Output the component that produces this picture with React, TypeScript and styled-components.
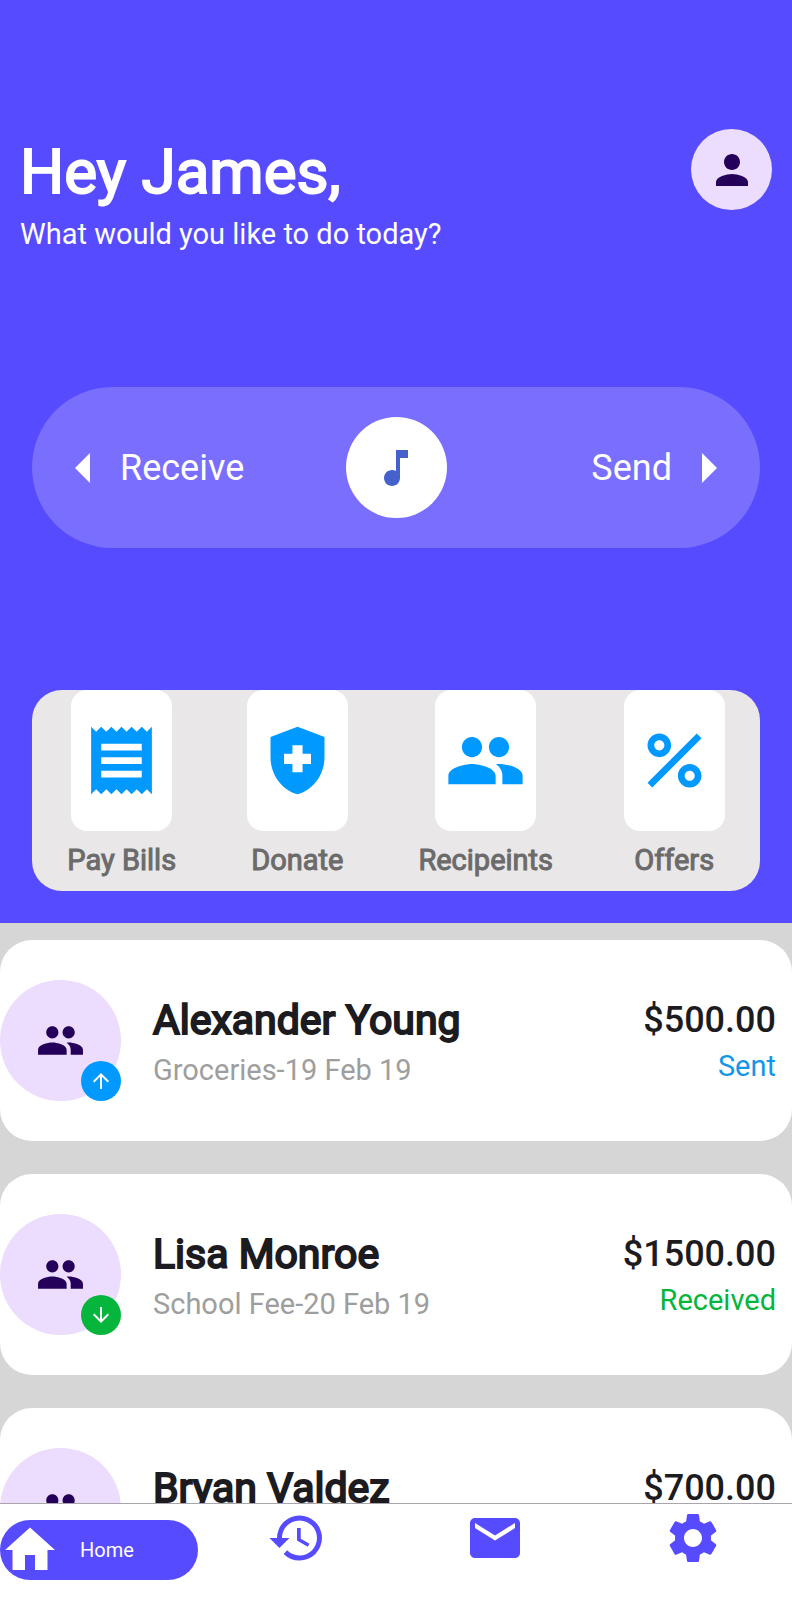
import React from "react";
import styled, { createGlobalStyle } from "styled-components";
import type { IconType } from "react-icons";
import {
  MdArrowDownward,
  MdArrowLeft,
  MdArrowRight,
  MdArrowUpward,
  MdHealthAndSafety,
  MdHistory,
  MdHome,
  MdMail,
  MdMusicNote,
  MdPeople,
  MdPercent,
  MdPerson,
  MdReceipt,
  MdSettings,
} from "react-icons/md";

const color = {
  primary: "#574bff",
  pill: "#7a6eff",
  sky: "#0099ff",
  green: "#05b53c",
  lilac: "#ecdcfd",
  ink: "#25005a",
  text: "#1c1b1f",
  muted: "#9e9e9e",
};

const GlobalStyle = createGlobalStyle`
  * { box-sizing: border-box; }
  body { margin: 0; font-family: Roboto, "Liberation Sans", sans-serif; }
  h1, h2, p, ul { margin: 0; padding: 0; }
  ul { list-style: none; }
  button { border: 0; padding: 0; background: none; font: inherit; cursor: pointer; }
  a { color: inherit; text-decoration: none; }
  svg { display: block; flex: none; }
`;

const Screen = styled.div`
  display: flex;
  flex-direction: column;
  height: 100vh;
  background: #d6d6d6;
`;

const Header = styled.header`
  flex: none;
  padding: 129px 0 32px;
  background: ${color.primary};
  color: #fff;
`;

const Greeting = styled.div`
  display: flex;
  justify-content: space-between;
  align-items: flex-start;
  padding: 0 20px;
`;

const GreetingText = styled.div`
  padding-top: 5px;
`;

const Title = styled.h1`
  font-size: 62px;
  line-height: 76px;
  font-weight: 400;
  -webkit-text-stroke: 2px currentColor;
`;

const Subtitle = styled.p`
  margin-top: 7px;
  font-size: 29px;
  line-height: 34px;
`;

const ProfileButton = styled.button`
  display: grid;
  place-items: center;
  width: 81px;
  height: 81px;
  border-radius: 50%;
  background: ${color.lilac};
  color: ${color.ink};
`;

const TransferBar = styled.div`
  display: grid;
  grid-template-columns: 1fr auto 1fr;
  align-items: center;
  height: 161px;
  margin: 136px 32px 0;
  padding: 0 16px;
  border-radius: 81px;
  background: ${color.pill};
`;

const TransferButton = styled.button<{ $end?: boolean }>`
  display: flex;
  align-items: center;
  justify-self: ${(p) => (p.$end ? "end" : "start")};
  color: #fff;
  font-size: 36px;
  line-height: 42px;
`;

const MusicButton = styled.button`
  display: grid;
  place-items: center;
  width: 101px;
  height: 101px;
  border-radius: 50%;
  background: #fff;
  color: #4562cc;
`;

const QuickPanel = styled.div`
  display: flex;
  justify-content: space-around;
  height: 201px;
  margin: 142px 32px 0;
  border-radius: 30px;
  background: #e9e7e8;
`;

const QuickAction = styled.button`
  display: flex;
  flex-direction: column;
  align-items: center;
  gap: 12px;
  color: #6b6b6b;
  font-size: 29px;
  line-height: 34px;
  -webkit-text-stroke: 1px currentColor;
`;

const QuickTile = styled.span`
  display: grid;
  place-items: center;
  width: 101px;
  height: 141px;
  border-radius: 16px;
  background: #fff;
  color: ${color.sky};
`;

const Feed = styled.ul`
  flex: 1;
  min-height: 0;
  overflow-y: auto;
  scrollbar-width: none;
  display: flex;
  flex-direction: column;
  gap: 33px;
  padding: 17px 0;
`;

const Card = styled.li`
  flex: none;
  display: flex;
  align-items: center;
  height: 201px;
  padding-right: 16px;
  border-radius: 32px;
  background: #fff;
`;

const Avatar = styled.div`
  position: relative;
  display: grid;
  place-items: center;
  flex: none;
  width: 121px;
  height: 121px;
  border-radius: 50%;
  background: ${color.lilac};
  color: ${color.ink};
`;

const Badge = styled.span<{ $sent: boolean }>`
  position: absolute;
  right: 0;
  bottom: 0;
  display: grid;
  place-items: center;
  width: 40px;
  height: 40px;
  border-radius: 50%;
  background: ${(p) => (p.$sent ? color.sky : color.green)};
  color: #fff;
`;

const Details = styled.div`
  flex: 1;
  padding-left: 32px;
`;

const Name = styled.h2`
  font-size: 41px;
  line-height: 50px;
  font-weight: 400;
  -webkit-text-stroke: 2px currentColor;
  color: ${color.text};
`;

const Note = styled.p`
  margin-top: 8px;
  font-size: 29px;
  line-height: 34px;
  color: ${color.muted};
`;

const Amounts = styled.div`
  text-align: right;
`;

const Amount = styled.p`
  font-size: 36px;
  line-height: 42px;
  font-weight: 500;
  color: ${color.text};
`;

const Status = styled.p<{ $sent: boolean }>`
  margin-top: 8px;
  font-size: 29px;
  line-height: 34px;
  color: ${(p) => (p.$sent ? "#1296e8" : color.green)};
`;

const TabBar = styled.nav`
  flex: none;
  display: grid;
  grid-template-columns: repeat(4, 1fr);
  height: 97px;
  border-top: 1px solid #a9a5ac;
  background: #fff;
`;

const Tab = styled.a`
  display: flex;
  justify-content: center;
  padding-top: 4px;
  color: ${color.primary};
`;

const ActiveTab = styled.a`
  display: flex;
  align-items: center;
  gap: 20px;
  height: 60px;
  margin-top: 16px;
  border-radius: 30px;
  background: ${color.primary};
  color: #fff;
  font-size: 20px;
  line-height: 24px;
`;

const quickActions: { label: string; Icon: IconType }[] = [
  { label: "Pay Bills", Icon: MdReceipt },
  { label: "Donate", Icon: MdHealthAndSafety },
  { label: "Recipeints", Icon: MdPeople },
  { label: "Offers", Icon: MdPercent },
];

const transactions = [
  { name: "Alexander Young", note: "Groceries-19 Feb 19", amount: "$500.00", sent: true },
  { name: "Lisa Monroe", note: "School Fee-20 Feb 19", amount: "$1500.00", sent: false },
  { name: "Bryan Valdez", note: "Rent-21 Feb 19", amount: "$700.00", sent: true },
];

const tabs: { label: string; Icon: IconType }[] = [
  { label: "History", Icon: MdHistory },
  { label: "Messages", Icon: MdMail },
  { label: "Settings", Icon: MdSettings },
];

export default function App() {
  return (
    <Screen>
      <GlobalStyle />
      <Header>
        <Greeting>
          <GreetingText>
            <Title>Hey James,</Title>
            <Subtitle>What would you like to do today?</Subtitle>
          </GreetingText>
          <ProfileButton aria-label="Profile">
            <MdPerson size={48} />
          </ProfileButton>
        </Greeting>
        <TransferBar>
          <TransferButton>
            <MdArrowLeft size={72} />
            Receive
          </TransferButton>
          <MusicButton aria-label="Music">
            <MdMusicNote size={48} />
          </MusicButton>
          <TransferButton $end>
            Send
            <MdArrowRight size={72} />
          </TransferButton>
        </TransferBar>
        <QuickPanel>
          {quickActions.map(({ label, Icon }) => (
            <QuickAction key={label}>
              <QuickTile>
                <Icon size={81} />
              </QuickTile>
              {label}
            </QuickAction>
          ))}
        </QuickPanel>
      </Header>
      <Feed>
        {transactions.map((t) => (
          <Card key={t.name}>
            <Avatar>
              <MdPeople size={49} />
              <Badge $sent={t.sent}>
                {t.sent ? <MdArrowUpward size={24} /> : <MdArrowDownward size={24} />}
              </Badge>
            </Avatar>
            <Details>
              <Name>{t.name}</Name>
              <Note>{t.note}</Note>
            </Details>
            <Amounts>
              <Amount>{t.amount}</Amount>
              <Status $sent={t.sent}>{t.sent ? "Sent" : "Received"}</Status>
            </Amounts>
          </Card>
        ))}
      </Feed>
      <TabBar>
        <ActiveTab href="#home">
          <MdHome size={60} />
          Home
        </ActiveTab>
        {tabs.map(({ label, Icon }) => (
          <Tab key={label} href={`#${label.toLowerCase()}`} aria-label={label}>
            <Icon size={60} />
          </Tab>
        ))}
      </TabBar>
    </Screen>
  );
}
